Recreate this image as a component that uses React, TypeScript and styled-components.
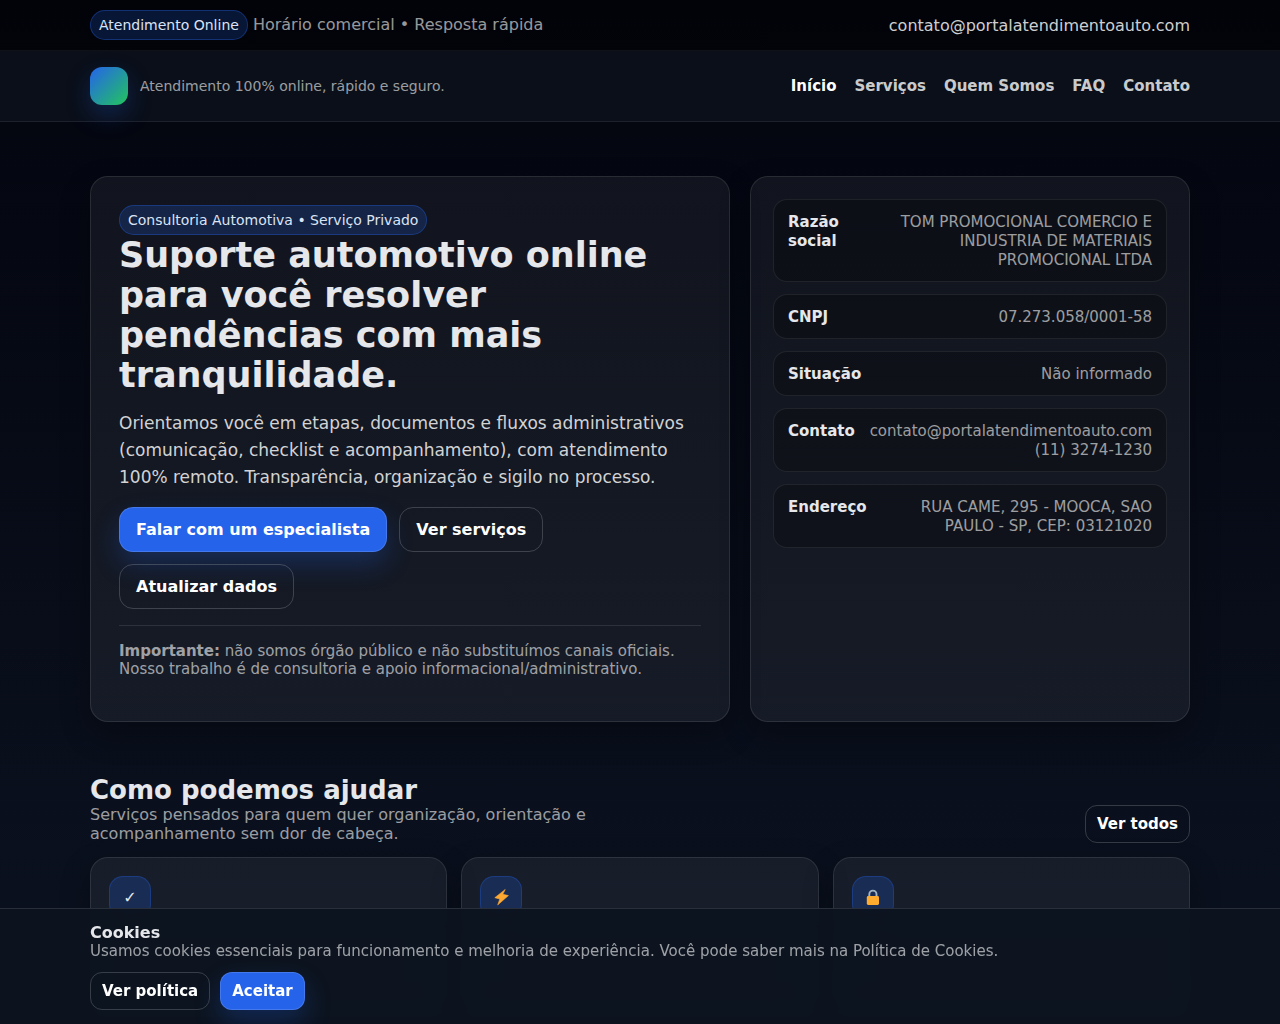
import React from "react";
import styled, { createGlobalStyle, css } from "styled-components";

const GlobalStyle = createGlobalStyle`
  *, *::before, *::after { box-sizing: border-box; }
  html { background: #0b1220; }
  body {
    margin: 0;
    min-height: 100vh;
    background: linear-gradient(180deg, #03050e 0, #0b1220 1024px);
    color: #e5e7eb;
    font-family: "DejaVu Sans", Verdana, sans-serif;
    font-size: 16px;
    line-height: 19px;
  }
  h1, h2, p, dl, dd { margin: 0; }
  a { color: inherit; text-decoration: none; }
`;

const muted = "rgba(255, 255, 255, 0.6)";
const line = "rgba(255, 255, 255, 0.1)";

const Container = styled.div`
  width: 92%;
  max-width: 1100px;
  margin: 0 auto;
`;

const Bar = styled(Container)`
  display: flex;
  flex-wrap: wrap;
  align-items: center;
  justify-content: space-between;
  gap: 8px 18px;
`;

const TopBar = styled.div`
  padding: 10px 0;
  background: rgba(0, 0, 0, 0.3);
  border-bottom: 1px solid rgba(255, 255, 255, 0.06);
`;

const TopInfo = styled.div`
  display: flex;
  flex-wrap: wrap;
  align-items: baseline;
  gap: 5px;
  color: ${muted};
`;

const Badge = styled.span`
  display: inline-flex;
  align-items: center;
  padding: 6px 8px;
  border: 1px solid rgba(37, 99, 235, 0.35);
  border-radius: 999px;
  background: rgba(37, 99, 235, 0.2);
  color: #dbe3f4;
  font-size: 14px;
  line-height: 16px;
`;

const MailLink = styled.a`
  color: rgba(255, 255, 255, 0.82);
`;

const Header = styled.header`
  padding: 16px 0;
  background: #0a0f19;
  border-bottom: 1px solid rgba(255, 255, 255, 0.08);
`;

const Brand = styled.a`
  display: flex;
  align-items: center;
  gap: 12px;
  color: ${muted};
  font-size: 14px;
`;

const LogoMark = styled.span`
  width: 38px;
  height: 38px;
  border-radius: 12px;
  background: linear-gradient(135deg, #2563eb, #22c55e);
  box-shadow: 0 10px 24px rgba(37, 99, 235, 0.25);
`;

const Nav = styled.nav`
  display: flex;
  flex-wrap: wrap;
  gap: 18px;
`;

const NavLink = styled.a<{ $active?: boolean }>`
  color: ${(p) => (p.$active ? "#ffffff" : "rgba(255, 255, 255, 0.8)")};
  font-size: 15px;
  font-weight: 700;
`;

const Hero = styled.section`
  padding: 54px 0 53px;
`;

const HeroGrid = styled(Container)`
  display: grid;
  grid-template-columns: 16fr 11fr;
  gap: 20px;
  @media (max-width: 900px) {
    grid-template-columns: 1fr;
  }
`;

const panel = css`
  border: 1px solid ${line};
  border-radius: 18px;
  background: rgba(255, 255, 255, 0.055);
  box-shadow: 0 12px 30px rgba(0, 0, 0, 0.3);
`;

const HeroCard = styled.div`
  ${panel}
  padding: 28px 28px 43px;
`;

const HeroTitle = styled.h1`
  margin-bottom: 15px;
  font-size: 35px;
  line-height: 40px;
  font-weight: 700;
`;

const Lead = styled.p`
  margin-bottom: 16px;
  color: rgba(255, 255, 255, 0.82);
  font-size: 17px;
  line-height: 27px;
`;

const Actions = styled.div<{ $compact?: boolean }>`
  display: flex;
  flex-wrap: wrap;
  gap: ${(p) => (p.$compact ? "10px" : "12px")};
`;

const buttonStyle = css<{ $primary?: boolean; $small?: boolean }>`
  display: inline-flex;
  align-items: center;
  justify-content: center;
  padding: ${(p) => (p.$small ? "9px 11px" : "12px 16px")};
  border: 1px solid ${(p) => (p.$primary ? "rgba(255, 255, 255, 0.14)" : "rgba(255, 255, 255, 0.18)")};
  background-color: ${(p) => (p.$primary ? "#2563eb" : "transparent")};
  box-shadow: ${(p) => (p.$primary ? "0 12px 26px rgba(37, 99, 235, 0.25)" : "none")};
  border-radius: ${(p) => (p.$small ? "12px" : "14px")};
  color: #ffffff;
  font-family: inherit;
  font-size: ${(p) => (p.$small ? "15px" : "16px")};
  line-height: ${(p) => (p.$small ? "18px" : "19px")};
  font-weight: 700;
  white-space: nowrap;
  cursor: pointer;
`;

const ButtonLink = styled.a<{ $primary?: boolean; $small?: boolean }>`
  ${buttonStyle}
`;

const Button = styled.button<{ $primary?: boolean; $small?: boolean }>`
  ${buttonStyle}
`;

const Divider = styled.hr`
  margin: 16px 0;
  border: 0;
  border-top: 1px solid ${line};
`;

const Note = styled.p`
  color: ${muted};
  font-size: 15px;
  line-height: 18px;
`;

const CompanyCard = styled.aside`
  ${panel}
  padding: 22px;
`;

const DataList = styled.dl`
  display: flex;
  flex-direction: column;
  gap: 12px;
`;

const DataRow = styled.div`
  display: flex;
  justify-content: space-between;
  gap: 10px;
  padding: 13px 14px 11px;
  border: 1px solid rgba(255, 255, 255, 0.08);
  border-radius: 14px;
  background: rgba(0, 0, 0, 0.25);
  font-size: 15px;
`;

const DataLabel = styled.dt`
  font-weight: 700;
`;

const DataValue = styled.dd`
  max-width: 286px;
  color: ${muted};
  text-align: right;
`;

const SectionHead = styled(Container)`
  display: flex;
  flex-wrap: wrap;
  align-items: flex-end;
  justify-content: space-between;
  gap: 14px;
  margin-bottom: 14px;
`;

const SectionTitle = styled.h2`
  font-size: 26px;
  line-height: 30px;
  font-weight: 700;
`;

const SectionText = styled.p`
  max-width: 520px;
  color: ${muted};
`;

const Cards = styled(Container)`
  display: grid;
  grid-template-columns: repeat(3, 1fr);
  gap: 14px;
`;

const ServiceCard = styled.article`
  ${panel}
  min-height: 160px;
  padding: 18px;
`;

const ServiceIcon = styled.div`
  display: grid;
  place-items: center;
  width: 42px;
  height: 42px;
  border: 1px solid rgba(37, 99, 235, 0.3);
  border-radius: 14px;
  background: rgba(37, 99, 235, 0.22);
`;

const CookieBar = styled.div`
  position: fixed;
  right: 0;
  bottom: 0;
  left: 0;
  padding: 14px 0;
  border-top: 1px solid rgba(255, 255, 255, 0.12);
  background: rgba(12, 20, 31, 0.96);
  backdrop-filter: blur(10px);
`;

const CookieTitle = styled.strong`
  display: block;
`;

const CookieText = styled.p`
  margin-bottom: 11px;
  color: ${muted};
  font-size: 15px;
`;

const navItems = ["Início", "Serviços", "Quem Somos", "FAQ", "Contato"];

const companyData: { label: string; value: React.ReactNode }[] = [
  { label: "Razão social", value: "TOM PROMOCIONAL COMERCIO E INDUSTRIA DE MATERIAIS PROMOCIONAL LTDA" },
  { label: "CNPJ", value: "07.273.058/0001-58" },
  { label: "Situação", value: "Não informado" },
  { label: "Contato", value: <>contato@portalatendimentoauto.com<br />(11) 3274-1230</> },
  { label: "Endereço", value: "RUA CAME, 295 - MOOCA, SAO PAULO - SP, CEP: 03121020" },
];

const BoltIcon = () => (
  <svg width="18" height="18" viewBox="0 0 18 18" aria-hidden="true">
    <path
      d="M13.2 1.5 2.8 9.7l5 1.3-2.1 5.9L16.4 7.6l-5.6-1.3z"
      fill="#fea832"
      stroke="#fea832"
      strokeWidth="0.6"
      strokeLinejoin="round"
    />
  </svg>
);

const LockIcon = () => (
  <svg width="18" height="18" viewBox="0 0 18 18" aria-hidden="true">
    <path d="M5.3 9.5V6.2a3.6 3.6 0 0 1 7.2 0v3.3" fill="none" stroke="#a3b5c2" strokeWidth="1.9" />
    <rect x="2.8" y="8" width="12.2" height="9" rx="1.4" fill="#ffab2e" />
  </svg>
);

export default function App() {
  return (
    <>
      <GlobalStyle />
      <TopBar>
        <Bar>
          <TopInfo>
            <Badge>Atendimento Online</Badge>
            <span>Horário comercial • Resposta rápida</span>
          </TopInfo>
          <MailLink href="mailto:contato@portalatendimentoauto.com">contato@portalatendimentoauto.com</MailLink>
        </Bar>
      </TopBar>

      <Header>
        <Bar>
          <Brand href="#">
            <LogoMark />
            <span>Atendimento 100% online, rápido e seguro.</span>
          </Brand>
          <Nav>
            {navItems.map((item, i) => (
              <NavLink key={item} href="#" $active={i === 0}>{item}</NavLink>
            ))}
          </Nav>
        </Bar>
      </Header>

      <main>
        <Hero>
          <HeroGrid>
            <HeroCard>
              <Badge>Consultoria Automotiva • Serviço Privado</Badge>
              <HeroTitle>Suporte automotivo online para você resolver pendências com mais tranquilidade.</HeroTitle>
              <Lead>
                Orientamos você em etapas, documentos e fluxos administrativos (comunicação, checklist e
                acompanhamento), com atendimento 100% remoto. Transparência, organização e sigilo no processo.
              </Lead>
              <Actions>
                <ButtonLink href="#" $primary>Falar com um especialista</ButtonLink>
                <ButtonLink href="#">Ver serviços</ButtonLink>
                <ButtonLink href="#">Atualizar dados</ButtonLink>
              </Actions>
              <Divider />
              <Note>
                <strong>Importante:</strong> não somos órgão público e não substituímos canais oficiais.
                <br />
                Nosso trabalho é de consultoria e apoio informacional/administrativo.
              </Note>
            </HeroCard>

            <CompanyCard>
              <DataList>
                {companyData.map(({ label, value }) => (
                  <DataRow key={label}>
                    <DataLabel>{label}</DataLabel>
                    <DataValue>{value}</DataValue>
                  </DataRow>
                ))}
              </DataList>
            </CompanyCard>
          </HeroGrid>
        </Hero>

        <section>
          <SectionHead>
            <div>
              <SectionTitle>Como podemos ajudar</SectionTitle>
              <SectionText>
                Serviços pensados para quem quer organização, orientação e acompanhamento sem dor de cabeça.
              </SectionText>
            </div>
            <ButtonLink href="#" $small>Ver todos</ButtonLink>
          </SectionHead>
          <Cards>
            <ServiceCard><ServiceIcon>✓</ServiceIcon></ServiceCard>
            <ServiceCard><ServiceIcon><BoltIcon /></ServiceIcon></ServiceCard>
            <ServiceCard><ServiceIcon><LockIcon /></ServiceIcon></ServiceCard>
          </Cards>
        </section>
      </main>

      <CookieBar role="region" aria-label="Cookies">
        <Container>
          <CookieTitle>Cookies</CookieTitle>
          <CookieText>
            Usamos cookies essenciais para funcionamento e melhoria de experiência. Você pode saber mais na
            Política de Cookies.
          </CookieText>
          <Actions $compact>
            <ButtonLink href="#" $small>Ver política</ButtonLink>
            <Button type="button" $small $primary>Aceitar</Button>
          </Actions>
        </Container>
      </CookieBar>
    </>
  );
}
